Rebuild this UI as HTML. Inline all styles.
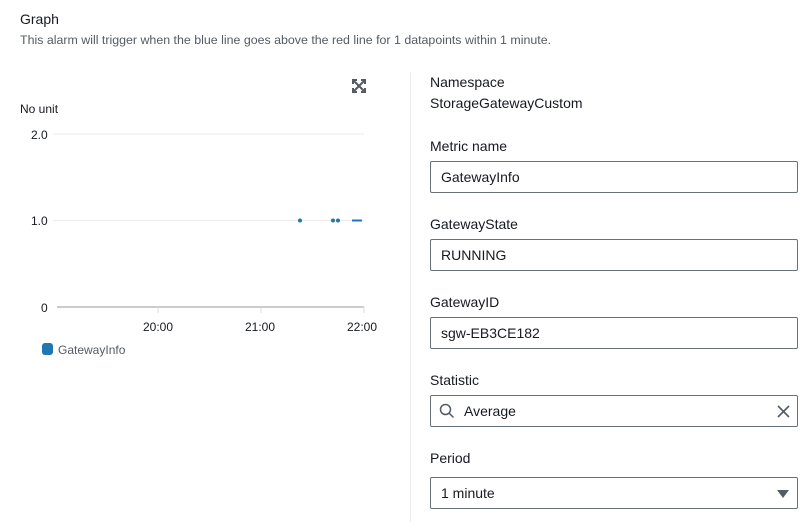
<!DOCTYPE html>
<html><head><style>
body{margin:0;width:810px;height:522px;background:#fff;font-family:"Liberation Sans",sans-serif;color:#16191f;position:relative;overflow:hidden}
.a{position:absolute;white-space:nowrap}
.lbl{font-size:14px}
.inp{position:absolute;left:430px;width:366px;height:30px;border:1px solid #687078;border-radius:2px;font-size:14px;line-height:30px;box-sizing:content-box}
.inp span{position:absolute;left:10px}
</style></head><body>
<div class="a" style="left:20px;top:11px;font-size:14px">Graph</div>
<div class="a" style="left:20px;top:33px;font-size:12.4px;color:#545b64">This alarm will trigger when the blue line goes above the red line for 1 datapoints within 1 minute.</div>
<svg class="a" style="left:351px;top:78px" width="16" height="16" viewBox="0 0 16 16" fill="none" stroke="#545b64" stroke-width="2"><path d="M2 6V2h4M10 2h4v4M14 10v4h-4M6 14H2v-4M2 2l12 12M14 2L2 14"/></svg>
<div class="a" style="left:20px;top:102px;font-size:12px">No unit</div>
<svg class="a" style="left:0;top:120px" width="400" height="250">
<g font-family="Liberation Sans" font-size="12" fill="#16191f">
<text x="31" y="19">2.0</text><text x="31" y="105">1.0</text><text x="41" y="192">0</text>
<text x="143" y="211">20:00</text><text x="245" y="211">21:00</text><text x="347" y="211">22:00</text>
</g>
<line x1="53" y1="14" x2="364" y2="14" stroke="#e9ebed"/>
<line x1="53" y1="100.5" x2="364" y2="100.5" stroke="#e9ebed"/>
<line x1="57" y1="187" x2="364" y2="187" stroke="#ccc" stroke-width="2"/>
<g stroke="#ddd"><line x1="158" y1="187" x2="158" y2="193"/><line x1="261" y1="187" x2="261" y2="193"/><line x1="364" y1="187" x2="364" y2="193"/></g>
<g fill="#1f77b4"><circle cx="300" cy="100.5" r="2"/><circle cx="333" cy="100.5" r="2"/><circle cx="338" cy="100.5" r="2"/></g>
<line x1="352" y1="100.5" x2="362" y2="100.5" stroke="#1f77b4" stroke-width="2"/>
<rect x="42" y="223" width="11" height="12" rx="3" fill="#1f77b4"/>
<text x="58" y="234" font-family="Liberation Sans" font-size="12" fill="#545b64">GatewayInfo</text>
</svg>
<div class="a" style="left:410px;top:72px;width:1px;height:450px;background:#e9ebed"></div>
<div class="a lbl" style="left:430px;top:74px">Namespace</div>
<div class="a lbl" style="left:430px;top:95px">StorageGatewayCustom</div>
<div class="a lbl" style="left:430px;top:138px">Metric name</div>
<div class="inp" style="top:161px"><span>GatewayInfo</span></div>
<div class="a lbl" style="left:430px;top:216px">GatewayState</div>
<div class="inp" style="top:239px"><span>RUNNING</span></div>
<div class="a lbl" style="left:430px;top:294px">GatewayID</div>
<div class="inp" style="top:317px"><span>sgw-EB3CE182</span></div>
<div class="a lbl" style="left:430px;top:372px">Statistic</div>
<div class="inp" style="top:395px"><span style="left:33px">Average</span>
<svg class="a" style="left:8px;top:7px" width="16" height="16" fill="none" stroke="#545b64" stroke-width="1.5"><circle cx="6.5" cy="6.5" r="5"/><path d="M10 10l4.5 4.5"/></svg>
<svg class="a" style="left:346px;top:9px" width="13" height="13" fill="none" stroke="#545b64" stroke-width="1.6"><path d="M1 1l11 11M12 1L1 12"/></svg></div>
<div class="a lbl" style="left:430px;top:450px">Period</div>
<div class="inp" style="top:477px"><span>1 minute</span>
<svg class="a" style="left:346px;top:11px" width="12" height="10"><path d="M0 1h12L6 9z" fill="#545b64"/></svg></div>
</body></html>
